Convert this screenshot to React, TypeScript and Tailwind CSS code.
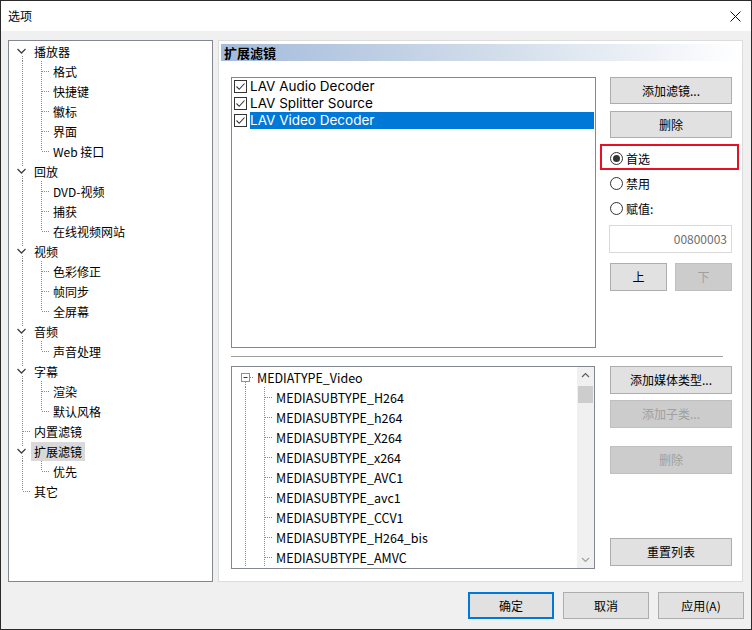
import React from 'react';

const FONT = { fontFamily: "'Noto Sans CJK SC', 'Noto Sans', 'Liberation Sans', sans-serif" };
const LATIN = { fontFamily: "Inter, 'Noto Sans', sans-serif" };

type Node = { label: string; children?: string[]; selected?: boolean };

const TREE: Node[] = [
  { label: '播放器', children: ['格式', '快捷键', '徽标', '界面', 'Web 接口'] },
  { label: '回放', children: ['DVD-视频', '捕获', '在线视频网站'] },
  { label: '视频', children: ['色彩修正', '帧同步', '全屏幕'] },
  { label: '音频', children: ['声音处理'] },
  { label: '字幕', children: ['渲染', '默认风格'] },
  { label: '内置滤镜' },
  { label: '扩展滤镜', children: ['优先'], selected: true },
  { label: '其它' },
];

const SUBTYPES = [
  'MEDIASUBTYPE_H264',
  'MEDIASUBTYPE_h264',
  'MEDIASUBTYPE_X264',
  'MEDIASUBTYPE_x264',
  'MEDIASUBTYPE_AVC1',
  'MEDIASUBTYPE_avc1',
  'MEDIASUBTYPE_CCV1',
  'MEDIASUBTYPE_H264_bis',
  'MEDIASUBTYPE_AMVC',
];

const DOT = { stroke: '#8a8a8a', strokeWidth: 1, strokeDasharray: '1 1' };

// dotted connector cell: vertical line at x, optional horizontal to the right edge
function Lines({ w, x, top = true, bottom = true, horiz = false }: { w: number; x: number; top?: boolean; bottom?: boolean; horiz?: boolean }) {
  return (
    <svg width={w} height={20} className="shrink-0 block">
      {top && <line x1={x + 0.5} y1={0} x2={x + 0.5} y2={10} {...DOT} />}
      {bottom && <line x1={x + 0.5} y1={10} x2={x + 0.5} y2={20} {...DOT} />}
      {horiz && <line x1={x + 1} y1={10.5} x2={w} y2={10.5} {...DOT} />}
    </svg>
  );
}

function Chevron({ first }: { first: boolean }) {
  return (
    <svg width={22} height={20} className="shrink-0 block">
      {!first && <line x1={13.5} y1={0} x2={13.5} y2={5} {...DOT} />}
      <path d="M8.5 8 L12.5 12 L16.5 8" fill="none" stroke="#404040" strokeWidth={1.3} />
      <line x1={13.5} y1={15} x2={13.5} y2={20} {...DOT} />
    </svg>
  );
}

function NavTree() {
  const rows: React.ReactNode[] = [];
  TREE.forEach((n, i) => {
    const last = i === TREE.length - 1;
    rows.push(
      <div key={n.label} className="flex h-[20px] items-center">
        {n.children ? <Chevron first={i === 0} /> : <Lines w={22} x={13} horiz bottom={!last} />}
        <span className={`px-[3px] leading-[19px] h-[19px] ${n.selected ? 'bg-[#d9d9d9]' : ''}`}>{n.label}</span>
      </div>
    );
    n.children?.forEach((c, j) => {
      const lastChild = j === n.children!.length - 1;
      rows.push(
        <div key={n.label + c} className="flex h-[20px] items-center">
          <Lines w={22} x={13} />
          <Lines w={19} x={10} horiz bottom={!lastChild} />
          <span className="px-[3px] leading-[19px]">{c}</span>
        </div>
      );
    });
  });
  return <div className="flex flex-col text-[12px] text-black">{rows}</div>;
}

function Btn({ children, disabled, className = '' }: { children: React.ReactNode; disabled?: boolean; className?: string }) {
  return (
    <div
      className={`flex items-center justify-center border text-[12px] ${
        disabled ? 'bg-[#cccccc] border-[#bfbfbf] text-[#a0a0a0]' : 'bg-[#e1e1e1] border-[#adadad] text-black'
      } ${className}`}
    >
      {children}
    </div>
  );
}

function Check({ label, selected }: { label: string; selected?: boolean }) {
  return (
    <div className="flex h-[17px] items-center">
      <div className="ml-[1px] w-[13px] h-[13px] border border-[#333] bg-white flex items-center justify-center">
        <svg width="11" height="11" viewBox="0 0 11 11">
          <path d="M1.5 5.5 L4.2 8.3 L9.5 2.5" fill="none" stroke="#333" strokeWidth={1.1} />
        </svg>
      </div>
      <span
        className={`ml-[3px] flex-1 h-[17px] leading-[17px] text-[13.5px] ${selected ? 'bg-[#0078d7] text-white' : 'text-black'}`}
        style={LATIN}
      >
        {label}
      </span>
    </div>
  );
}

function Radio({ label, on }: { label: string; on?: boolean }) {
  return (
    <div className="flex h-[25px] items-center text-[12px]">
      <div className="w-[13px] h-[13px] rounded-full border border-[#333] bg-white flex items-center justify-center">
        {on && <div className="w-[7px] h-[7px] rounded-full bg-[#333]" />}
      </div>
      <span className="ml-[3px]">{label}</span>
    </div>
  );
}

function MediaTree() {
  return (
    <div className="flex flex-col text-[12.5px] text-black">
      <div className="flex h-[20px] items-center">
        <svg width={22} height={20} className="shrink-0 block">
          <rect x={9.5} y={6.5} width={8} height={8} fill="white" stroke="#909090" />
          <line x1={11.5} y1={10.5} x2={15.5} y2={10.5} stroke="#333" />
          <line x1={13.5} y1={15} x2={13.5} y2={20} {...DOT} />
          <line x1={18} y1={10.5} x2={22} y2={10.5} {...DOT} />
        </svg>
        <span className="pl-[3px] leading-[19px]">MEDIATYPE_Video</span>
      </div>
      {SUBTYPES.map((s) => (
        <div key={s} className="flex h-[20px] items-center">
          <Lines w={22} x={13} />
          <Lines w={19} x={10} horiz />
          <span className="pl-[3px] leading-[19px]">{s}</span>
        </div>
      ))}
    </div>
  );
}

export default function App() {
  return (
    <div className="w-[752px] h-[630px] border border-[#2a2a2a] bg-[#f0f0f0] flex flex-col overflow-hidden" style={FONT}>
      {/* title bar */}
      <div className="h-[30px] bg-white flex items-center justify-between pl-[7px] pr-[10px] shrink-0">
        <span className="text-[12px] text-black">选项</span>
        <svg width="11" height="11" viewBox="0 0 11 11">
          <path d="M0.5 0.5 L10.5 10.5 M10.5 0.5 L0.5 10.5" stroke="#111" strokeWidth={1} />
        </svg>
      </div>

      <div className="flex gap-[5px] pl-[7px] pt-[9px]">
        {/* nav tree */}
        <div className="w-[205px] h-[542px] bg-white border border-[#828790]">
          <NavTree />
        </div>

        {/* page */}
        <div className="w-[525px] h-[542px] bg-white border border-[#dcdcdc] pl-[2px] pr-[1px] pt-[3px] flex flex-col">
          <div className="h-[17px] bg-gradient-to-r from-[#a3bbdb] via-[#cfdbe9] to-white flex items-center pl-[3px]">
            <span className="text-[13px] font-bold text-black leading-none">扩展滤镜</span>
          </div>

          <div className="flex mt-[16px] pl-[10px]">
            <div className="w-[365px] h-[271px] border border-[#828790] bg-white pl-[1px] pr-[1px]">
              <Check label="LAV Audio Decoder" />
              <Check label="LAV Splitter Source" />
              <Check label="LAV Video Decoder" selected />
            </div>
            <div className="ml-[14px] w-[122px] flex flex-col">
              <Btn className="h-[27px]">添加滤镜...</Btn>
              <Btn className="h-[27px] mt-[7px]">删除</Btn>
              <div className="relative mt-[8px]">
                <div className="absolute -left-[10px] -right-[7px] -top-[2px] h-[26px] border-2 border-[#e81123]" />
                <Radio label="首选" on />
                <Radio label="禁用" />
                <Radio label="赋值:" />
              </div>
              <div className="mt-[4px] -ml-[1px] h-[28px] border border-[#d9d9d9] bg-white flex items-center justify-end pr-[4px] text-[12px] text-[#6d6d6d]">
                00800003
              </div>
              <div className="flex justify-between mt-[10px]">
                <Btn className="w-[57px] h-[28px]">上</Btn>
                <Btn className="w-[57px] h-[28px]" disabled>下</Btn>
              </div>
            </div>
          </div>

          <div className="ml-[10px] w-[492px] mt-[8px] border-t border-[#a0a0a0]" />

          <div className="flex mt-[9px] pl-[10px]">
            <div className="w-[364px] h-[203px] border border-[#828790] bg-white flex">
              <div className="flex-1 overflow-hidden">
                <MediaTree />
              </div>
              <div className="w-[17px] bg-[#f0f0f0] flex flex-col items-center">
                <svg width="17" height="17" viewBox="0 0 17 17">
                  <path d="M5 10 L8.5 6.5 L12 10" fill="none" stroke="#606060" strokeWidth={1.2} />
                </svg>
                <div className="w-[15px] h-[17px] bg-[#cdcdcd] mt-[2px]" />
                <div className="flex-1" />
                <svg width="17" height="17" viewBox="0 0 17 17">
                  <path d="M5 7 L8.5 10.5 L12 7" fill="none" stroke="#a0a0a0" strokeWidth={1.2} />
                </svg>
              </div>
            </div>
            <div className="ml-[15px] w-[122px] flex flex-col">
              <Btn className="h-[28px]">添加媒体类型...</Btn>
              <Btn className="h-[28px] mt-[6px]" disabled>添加子类...</Btn>
              <Btn className="h-[28px] mt-[18px]" disabled>删除</Btn>
              <Btn className="h-[28px] mt-[64px]">重置列表</Btn>
            </div>
          </div>
        </div>
      </div>

      {/* dialog buttons */}
      <div className="flex justify-end gap-[9px] pr-[7px] mt-[10px]">
        <Btn className="w-[86px] h-[27px] !border-2 !border-[#0078d7]">确定</Btn>
        <Btn className="w-[86px] h-[27px]">取消</Btn>
        <Btn className="w-[86px] h-[27px]">应用(A)</Btn>
      </div>
    </div>
  );
}
